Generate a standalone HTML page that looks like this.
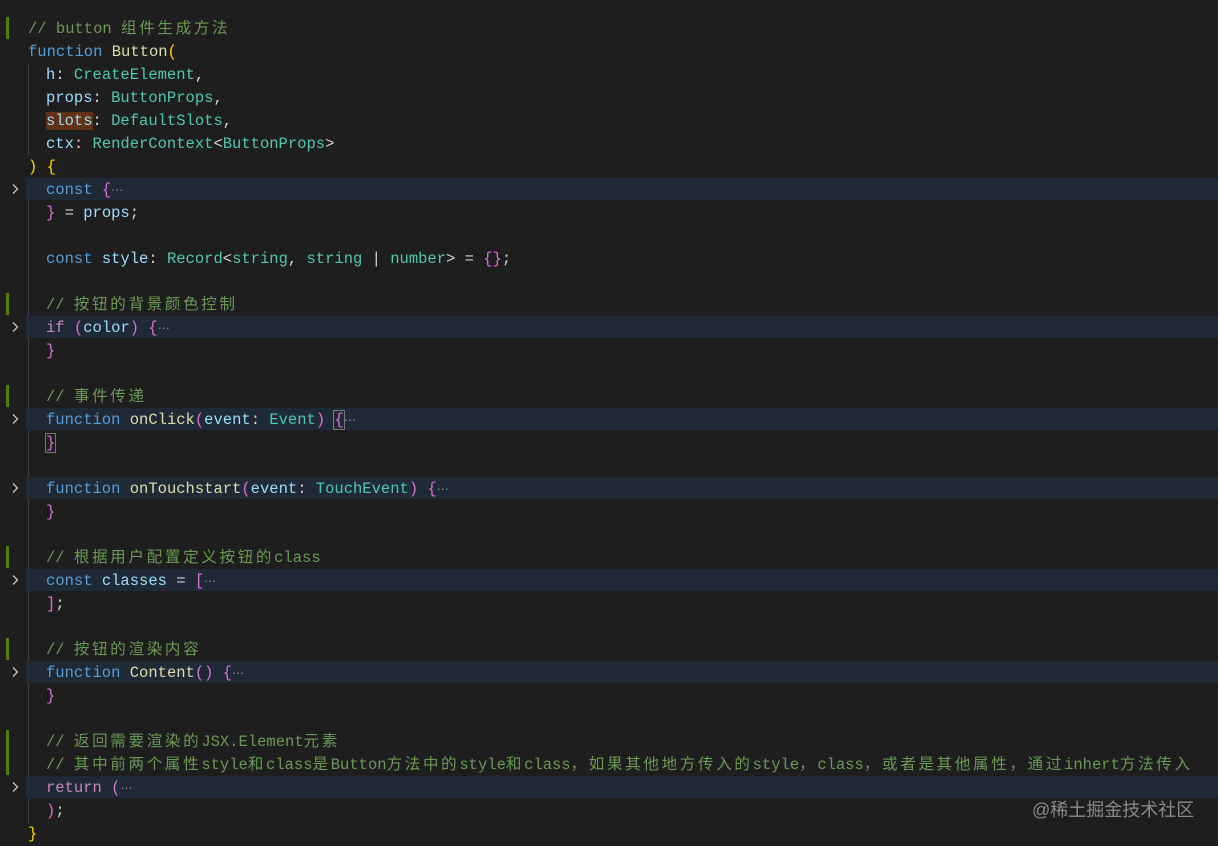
<!DOCTYPE html>
<html><head><meta charset="utf-8"><style>
body{margin:0;background:#1e1e1e;width:1218px;height:846px;overflow:hidden;position:relative;font-family:"Liberation Mono","Noto Sans CJK SC",monospace;font-size:15.5px;color:#d4d4d4}
.l{position:absolute;left:28px;height:23px;line-height:23px;white-space:pre;margin-top:2px}
.i{left:46px}
.hl{position:absolute;left:26px;right:0;height:22px;background:#1f2a36}
.g{position:absolute;left:6px;width:3px;background:#587c0c}
.ch{position:absolute;left:11px;width:8px;height:12px}
.c{color:#6a9955}.k{color:#569cd6}.f{color:#dcdcaa}.v{color:#9cdcfe}.t{color:#4ec9b0}.y{color:#ffd700}.p{color:#da70d6}.r{color:#c586c0}.e{color:#8c8c8c;font-family:"DejaVu Sans",sans-serif;font-size:12px}
.z{letter-spacing:2.7px}
.guide{position:absolute;left:28px;width:1px;background:#404040}
</style></head><body>
<div class="guide" style="top:63px;height:92px"></div>
<div class="guide" style="top:178px;height:646px"></div>
<div class="hl" style="top:178px"></div>
<div class="hl" style="top:316px"></div>
<div class="hl" style="top:408px"></div>
<div class="hl" style="top:477px"></div>
<div class="hl" style="top:569px"></div>
<div class="hl" style="top:661px"></div>
<div class="hl" style="top:776px"></div>
<div class="g" style="top:17px;height:22px"></div>
<div class="g" style="top:293px;height:22px"></div>
<div class="g" style="top:385px;height:22px"></div>
<div class="g" style="top:546px;height:22px"></div>
<div class="g" style="top:638px;height:22px"></div>
<div class="g" style="top:730px;height:45px"></div>
<svg class="ch" style="top:183px" viewBox="0 0 8 12"><path d="M2 1.5L6.5 6L2 10.5" fill="none" stroke="#c5c5c5" stroke-width="1.3"/></svg>
<svg class="ch" style="top:321px" viewBox="0 0 8 12"><path d="M2 1.5L6.5 6L2 10.5" fill="none" stroke="#c5c5c5" stroke-width="1.3"/></svg>
<svg class="ch" style="top:413px" viewBox="0 0 8 12"><path d="M2 1.5L6.5 6L2 10.5" fill="none" stroke="#c5c5c5" stroke-width="1.3"/></svg>
<svg class="ch" style="top:482px" viewBox="0 0 8 12"><path d="M2 1.5L6.5 6L2 10.5" fill="none" stroke="#c5c5c5" stroke-width="1.3"/></svg>
<svg class="ch" style="top:574px" viewBox="0 0 8 12"><path d="M2 1.5L6.5 6L2 10.5" fill="none" stroke="#c5c5c5" stroke-width="1.3"/></svg>
<svg class="ch" style="top:666px" viewBox="0 0 8 12"><path d="M2 1.5L6.5 6L2 10.5" fill="none" stroke="#c5c5c5" stroke-width="1.3"/></svg>
<svg class="ch" style="top:781px" viewBox="0 0 8 12"><path d="M2 1.5L6.5 6L2 10.5" fill="none" stroke="#c5c5c5" stroke-width="1.3"/></svg>

<div class="l c" style="top:16px">// button <span class="z">组件生成方法</span></div>
<div class="l" style="top:39px"><span class="k">function</span> <span class="f">Button</span><span class="y">(</span></div>
<div class="l i" style="top:62px"><span class="v">h</span>: <span class="t">CreateElement</span>,</div>
<div class="l i" style="top:85px"><span class="v">props</span>: <span class="t">ButtonProps</span>,</div>
<div class="l i" style="top:108px"><span class="v" style="background:#613214">slots</span>: <span class="t">DefaultSlots</span>,</div>
<div class="l i" style="top:131px"><span class="v">ctx</span>: <span class="t">RenderContext</span>&lt;<span class="t">ButtonProps</span>&gt;</div>
<div class="l" style="top:154px"><span class="y">)</span> <span class="y">{</span></div>
<div class="l i" style="top:177px"><span class="k">const</span> <span class="p">{</span><span class="e">⋯</span></div>
<div class="l i" style="top:200px"><span class="p">}</span> = <span class="v">props</span>;</div>
<div class="l i" style="top:246px"><span class="k">const</span> <span class="v">style</span>: <span class="t">Record</span>&lt;<span class="t">string</span>, <span class="t">string</span> | <span class="t">number</span>&gt; = <span class="p">{}</span>;</div>
<div class="l i c" style="top:292px">// <span class="z">按钮的背景颜色控制</span></div>
<div class="l i" style="top:315px"><span class="r">if</span> <span class="p">(</span><span class="v">color</span><span class="p">)</span> <span class="p">{</span><span class="e">⋯</span></div>
<div class="l i" style="top:338px"><span class="p">}</span></div>
<div class="l i c" style="top:384px">// <span class="z">事件传递</span></div>
<div class="l i" style="top:407px"><span class="k">function</span> <span class="f">onClick</span><span class="p">(</span><span class="v">event</span>: <span class="t">Event</span><span class="p">)</span> <span class="p" style="outline:1px solid #777">{</span><span class="e">⋯</span></div>
<div class="l i" style="top:430px"><span class="p" style="outline:1px solid #777">}</span></div>
<div class="l i" style="top:476px"><span class="k">function</span> <span class="f">onTouchstart</span><span class="p">(</span><span class="v">event</span>: <span class="t">TouchEvent</span><span class="p">)</span> <span class="p">{</span><span class="e">⋯</span></div>
<div class="l i" style="top:499px"><span class="p">}</span></div>
<div class="l i c" style="top:545px">// <span class="z">根据用户配置定义按钮的</span>class</div>
<div class="l i" style="top:568px"><span class="k">const</span> <span class="v">classes</span> = <span class="p">[</span><span class="e">⋯</span></div>
<div class="l i" style="top:591px"><span class="p">]</span>;</div>
<div class="l i c" style="top:637px">// <span class="z">按钮的渲染内容</span></div>
<div class="l i" style="top:660px"><span class="k">function</span> <span class="f">Content</span><span class="p">()</span> <span class="p">{</span><span class="e">⋯</span></div>
<div class="l i" style="top:683px"><span class="p">}</span></div>
<div class="l i c" style="top:729px">// <span class="z">返回需要渲染的</span>JSX.Element<span class="z">元素</span></div>
<div class="l i c" style="top:752px">// <span class="z">其中前两个属性</span>style<span class="z">和</span>class<span class="z">是</span>Button<span class="z">方法中的</span>style<span class="z">和</span>class<span class="z">，如果其他地方传入的</span>style<span class="z">，</span>class<span class="z">，或者是其他属性，通过</span>inhert<span class="z">方法传入</span></div>
<div class="l i" style="top:775px"><span class="r">return</span> <span class="p">(</span><span class="e">⋯</span></div>
<div class="l i" style="top:798px"><span class="p">)</span>;</div>
<div class="l" style="top:821px"><span class="y">}</span></div>
<div style="position:absolute;left:1032px;top:798px;font-family:'Liberation Sans','Noto Sans CJK SC',sans-serif;font-size:18px;color:#8a8a8a;line-height:24px">@稀土掘金技术社区</div>
</body></html>
